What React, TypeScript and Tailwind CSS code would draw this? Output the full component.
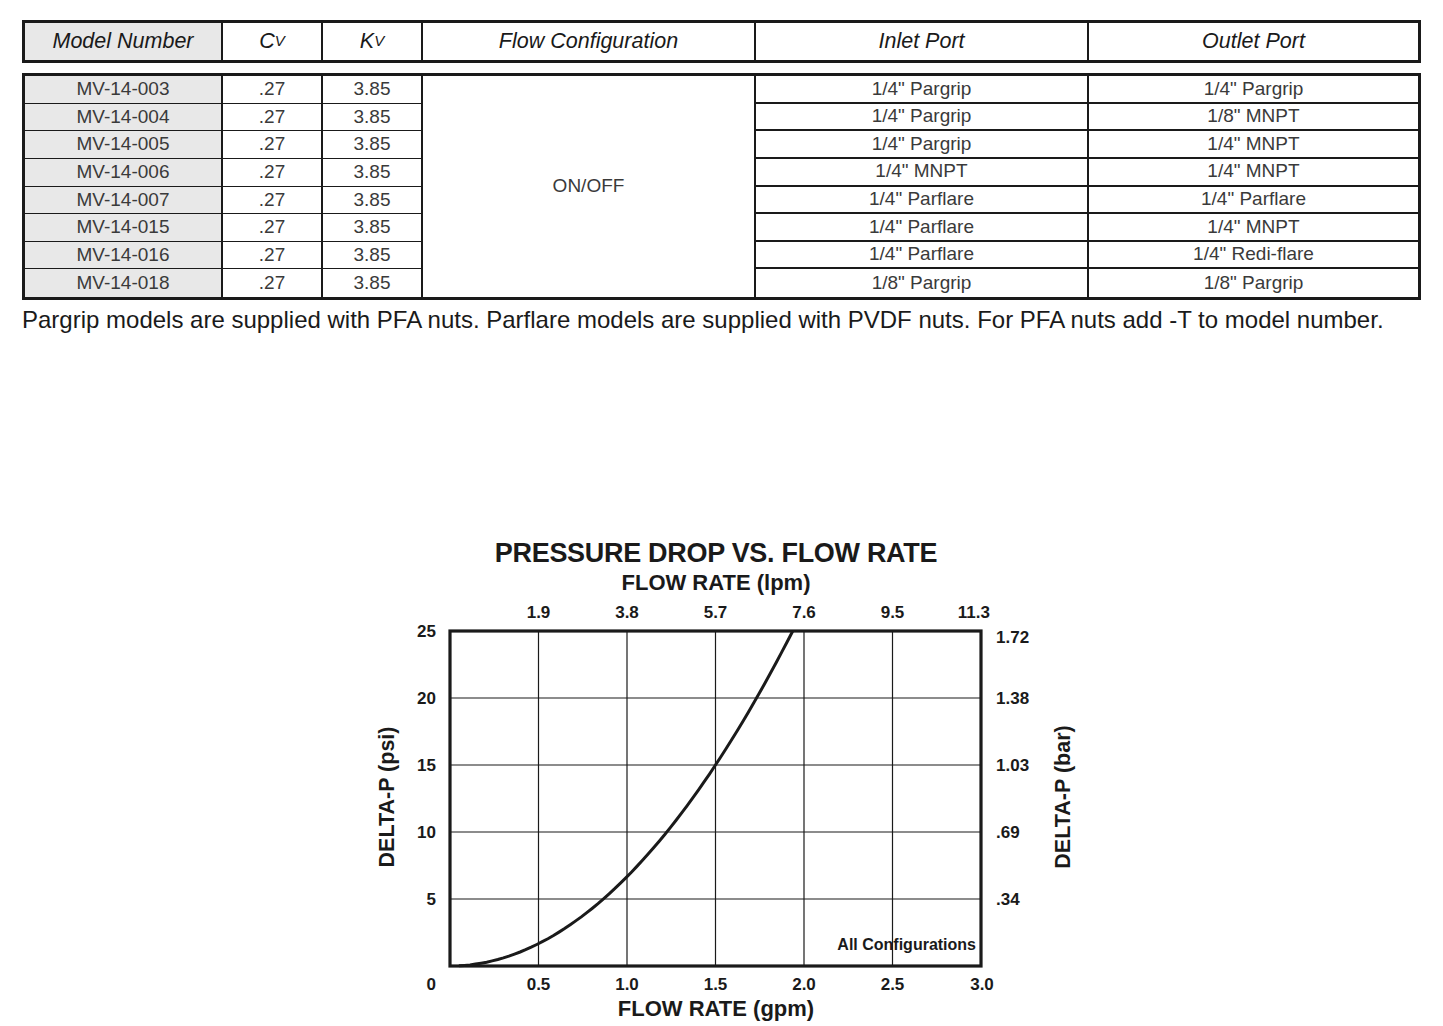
import React from "react"

const rows = [
  { model: "MV-14-003", inlet: '1/4" Pargrip', outlet: '1/4" Pargrip' },
  { model: "MV-14-004", inlet: '1/4" Pargrip', outlet: '1/8" MNPT' },
  { model: "MV-14-005", inlet: '1/4" Pargrip', outlet: '1/4" MNPT' },
  { model: "MV-14-006", inlet: '1/4" MNPT', outlet: '1/4" MNPT' },
  { model: "MV-14-007", inlet: '1/4" Parflare', outlet: '1/4" Parflare' },
  { model: "MV-14-015", inlet: '1/4" Parflare', outlet: '1/4" MNPT' },
  { model: "MV-14-016", inlet: '1/4" Parflare', outlet: '1/4" Redi-flare' },
  { model: "MV-14-018", inlet: '1/8" Pargrip', outlet: '1/8" Pargrip' },
]

const cols = "grid grid-cols-[198px_100px_100px_333px_333px_1fr]"

// chart geometry, in page pixels
const X0 = 450
const X1 = 981
const Y0 = 631
const Y1 = 966
const xAt = (gpm: number) => X0 + (gpm / 3) * (X1 - X0)
const yAt = (psi: number) => Y1 - (psi / 25) * (Y1 - Y0)

const k = 15 / (1.5 * 1.5)
const qMax = Math.sqrt(25 / k)
const curve = Array.from({ length: 61 }, (_, i) => {
  const q = 0.05 + (i / 60) * (qMax - 0.05)
  const p = k * q * q
  return `${i === 0 ? "M" : "L"}${xAt(q).toFixed(1)},${yAt(p).toFixed(1)}`
}).join(" ")

const gpmTicks = ["0.5", "1.0", "1.5", "2.0", "2.5"]
const lpmTicks = ["1.9", "3.8", "5.7", "7.6", "9.5"]
const psiTicks = [
  { v: 25, label: "25", bar: "1.72" },
  { v: 20, label: "20", bar: "1.38" },
  { v: 15, label: "15", bar: "1.03" },
  { v: 10, label: "10", bar: ".69" },
  { v: 5, label: "5", bar: ".34" },
]

function HeaderTable() {
  return (
    <div className={`${cols} h-[43px] border-[3px] border-[#1a1a1a] text-[21.5px] italic text-[#1a1a1a]`}>
      <div className="flex items-center justify-center border-r-2 border-[#1a1a1a] bg-[#e8e8e8]">Model Number</div>
      <div className="flex items-center justify-center border-r-2 border-[#1a1a1a]">
        C<span className="text-[15px] font-light">V</span>
      </div>
      <div className="flex items-center justify-center border-r-2 border-[#1a1a1a]">
        K<span className="text-[15px] font-light">V</span>
      </div>
      <div className="flex items-center justify-center border-r-2 border-[#1a1a1a]">Flow Configuration</div>
      <div className="flex items-center justify-center border-r-2 border-[#1a1a1a]">Inlet Port</div>
      <div className="flex items-center justify-center">Outlet Port</div>
    </div>
  )
}

function BodyTable() {
  return (
    <div
      className={`${cols} mt-[10px] h-[227px] grid-rows-[repeat(8,minmax(0,1fr))] border-[3px] border-[#1a1a1a] text-[19px] text-[#3a3a3a]`}
    >
      {rows.map((row, i) => {
        const last = i === rows.length - 1
        const thin = last ? "" : "border-b"
        const thick = last ? "" : "border-b-2"
        return (
          <React.Fragment key={row.model}>
            <div className={`flex items-center justify-center border-r-2 border-[#1a1a1a] bg-[#e8e8e8] ${thin}`}>{row.model}</div>
            <div className={`flex items-center justify-center border-r-2 border-[#1a1a1a] ${thin}`}>.27</div>
            <div className={`flex items-center justify-center border-r-2 border-[#1a1a1a] ${thin}`}>3.85</div>
            {i === 0 && (
              <div className="row-span-8 flex items-center justify-center border-r-2 border-[#1a1a1a]">ON/OFF</div>
            )}
            <div className={`flex items-center justify-center border-r-2 border-[#1a1a1a] ${thick}`}>{row.inlet}</div>
            <div className={`flex items-center justify-center border-[#1a1a1a] ${thick}`}>{row.outlet}</div>
          </React.Fragment>
        )
      })}
    </div>
  )
}

function PressureChart() {
  const font = "'Liberation Sans', Arial, sans-serif"
  return (
    <div className="ml-[366px] mt-[200px] font-bold text-[#1a1a1a]">
      <div className="h-[62px] w-[700px] pt-[3px] text-center">
        <h2 className="text-[27px] leading-[32px] tracking-[-0.3px]">PRESSURE DROP VS. FLOW RATE</h2>
        <div className="text-[22px] leading-[27px]">FLOW RATE (lpm)</div>
      </div>
      <svg width="730" height="431" viewBox="366 596 730 431" className="block">
        <g fontFamily={font} fontWeight="bold" fill="#1a1a1a">
          {lpmTicks.map((t, i) => (
            <text key={t} x={xAt(0.5 * (i + 1))} y={618} fontSize="17" textAnchor="middle">
              {t}
            </text>
          ))}
          <text x={990} y={618} fontSize="17" textAnchor="end">11.3</text>

          {psiTicks.map((t) => (
            <text key={t.label} x={436} y={yAt(t.v) + 6} fontSize="17" textAnchor="end">
              {t.label}
            </text>
          ))}
          <text x={436} y={990} fontSize="17" textAnchor="end">0</text>

          {psiTicks.map((t) => (
            <text key={t.bar} x={996} y={yAt(t.v) + (t.v === 25 ? 12 : 6)} fontSize="17">
              {t.bar}
            </text>
          ))}

          {gpmTicks.map((t, i) => (
            <text key={t} x={xAt(0.5 * (i + 1))} y={990} fontSize="17" textAnchor="middle">
              {t}
            </text>
          ))}
          <text x={982} y={990} fontSize="17" textAnchor="middle">3.0</text>

          <text x={716} y={1016} fontSize="22" textAnchor="middle">FLOW RATE (gpm)</text>

          <text x={394} y={797} fontSize="21.5" textAnchor="middle" transform="rotate(-90 394 797)">
            DELTA-P (psi)
          </text>
          <text x={1070} y={797} fontSize="21.5" textAnchor="middle" transform="rotate(-90 1070 797)">
            DELTA-P (bar)
          </text>

          <text x={976} y={950} fontSize="16" textAnchor="end">All Configurations</text>
        </g>

        {gpmTicks.map((t, i) => (
          <line key={t} x1={xAt(0.5 * (i + 1))} x2={xAt(0.5 * (i + 1))} y1={Y0} y2={Y1} stroke="#1a1a1a" strokeWidth="1.2" />
        ))}
        {[5, 10, 15, 20].map((v) => (
          <line key={v} x1={X0} x2={X1} y1={yAt(v)} y2={yAt(v)} stroke="#1a1a1a" strokeWidth="1.2" />
        ))}
        <rect x={X0} y={Y0} width={X1 - X0} height={Y1 - Y0} fill="none" stroke="#1a1a1a" strokeWidth="3.2" />
        <path d={curve} fill="none" stroke="#1a1a1a" strokeWidth="3" />
      </svg>
    </div>
  )
}

export default function App() {
  return (
    <div className="min-h-[1026px] w-[1443px] bg-white pt-[20px] font-['Liberation_Sans',Arial,sans-serif]">
      <div className="mx-[22px]">
        <HeaderTable />
        <BodyTable />
        <p className="mt-[6px] text-[24px] leading-[28px] text-[#1a1a1a]">
          Pargrip models are supplied with PFA nuts. Parflare models are supplied with PVDF nuts. For PFA nuts add -T to model number.
        </p>
      </div>
      <PressureChart />
    </div>
  )
}
